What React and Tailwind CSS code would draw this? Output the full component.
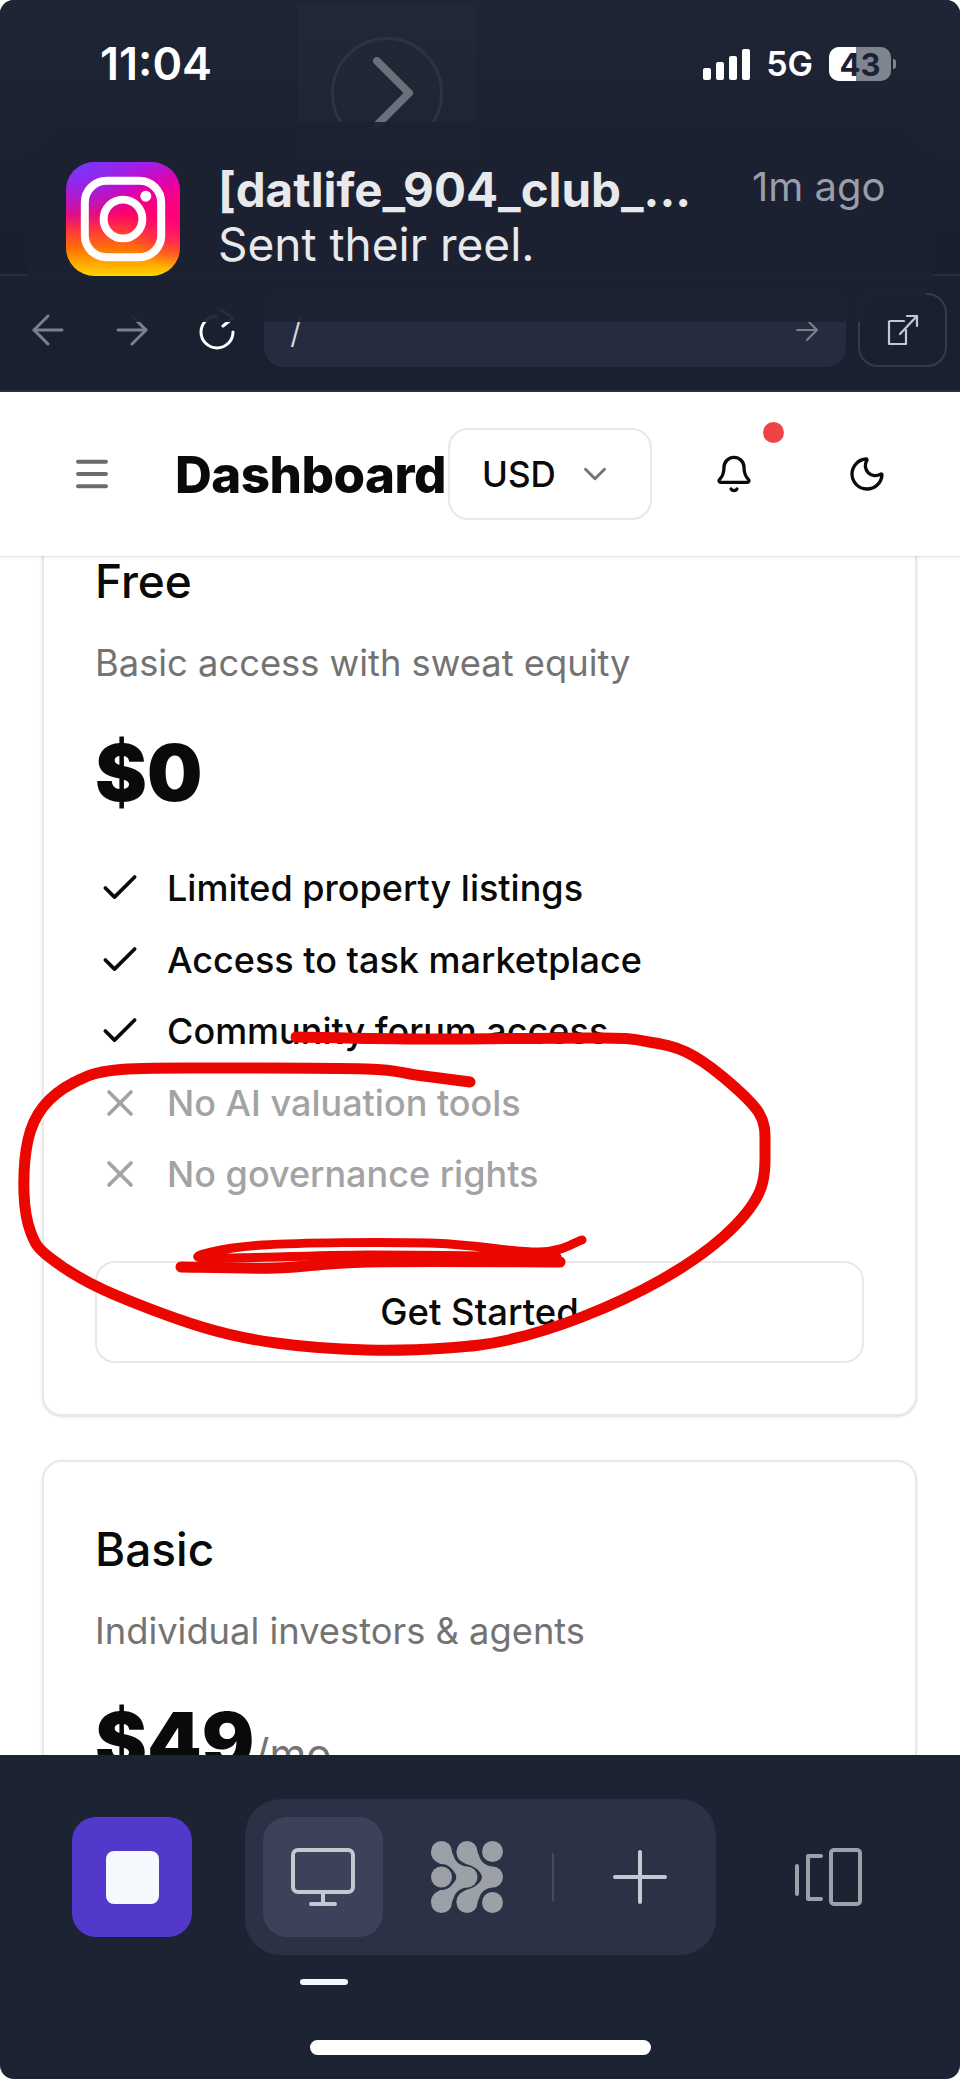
import { ArrowLeft, ArrowRight, Bell, Check, ChevronDown, Menu, Moon, X } from 'lucide-react'

const features = [
  { text: 'Limited property listings', ok: true },
  { text: 'Access to task marketplace', ok: true },
  { text: 'Community forum access', ok: true },
  { text: 'No AI valuation tools', ok: false },
  { text: 'No governance rights', ok: false },
]

// pontos tirados do zoom da tinta vermelha
const circlePoints = [
  [296, 1037], [429, 1039], [603, 1038], [649, 1042], [686, 1052], [723, 1077], [759, 1113], [765, 1147],
  [759, 1193], [723, 1237], [661, 1280], [582, 1317], [508, 1340], [447, 1348], [367, 1350], [276, 1343],
  [202, 1327], [104, 1290], [49, 1257], [31, 1233], [24, 1193], [28, 1140], [43, 1107], [73, 1083],
  [116, 1070], [214, 1068], [367, 1069], [416, 1075], [470, 1082],
]
const lineTopPoints = [[582, 1240], [539, 1252], [429, 1243], [263, 1245], [202, 1258], [368, 1255], [557, 1257]]
const lineBottomPoints = [[181, 1267], [276, 1268], [367, 1262], [560, 1262]]

// catmull-rom simples pra suavizar o traço
function smooth(points) {
  let d = `M${points[0][0]} ${points[0][1]}`
  for (let i = 0; i < points.length - 1; i++) {
    const p0 = points[i - 1] || points[i]
    const p1 = points[i]
    const p2 = points[i + 1]
    const p3 = points[i + 2] || p2
    const c1x = p1[0] + (p2[0] - p0[0]) / 6
    const c1y = p1[1] + (p2[1] - p0[1]) / 6
    const c2x = p2[0] - (p3[0] - p1[0]) / 6
    const c2y = p2[1] - (p3[1] - p1[1]) / 6
    d += `C${c1x} ${c1y} ${c2x} ${c2y} ${p2[0]} ${p2[1]}`
  }
  return d
}

function InstagramIcon() {
  return (
    <svg viewBox="0 0 100 100" className="w-[114px] h-[114px] shrink-0">
      <defs>
        <linearGradient id="igBase" x1="0" y1="1" x2="0" y2="0">
          <stop offset="0" stopColor="#ffd600" />
          <stop offset="0.22" stopColor="#ff7a00" />
          <stop offset="0.55" stopColor="#ff0069" />
          <stop offset="0.8" stopColor="#d300c5" />
          <stop offset="1" stopColor="#a020e8" />
        </linearGradient>
        <radialGradient id="igPurple" cx="0.1" cy="0" r="0.6">
          <stop offset="0" stopColor="#7638fa" />
          <stop offset="1" stopColor="#7638fa" stopOpacity="0" />
        </radialGradient>
        <radialGradient id="igPink" cx="1" cy="0.45" r="0.5">
          <stop offset="0" stopColor="#ff0080" />
          <stop offset="1" stopColor="#ff0080" stopOpacity="0" />
        </radialGradient>
      </defs>
      <rect width="100" height="100" rx="25" fill="url(#igBase)" />
      <rect width="100" height="100" rx="25" fill="url(#igPink)" />
      <rect width="100" height="100" rx="25" fill="url(#igPurple)" />
      <rect x="16.5" y="16.5" width="67" height="67" rx="19" fill="none" stroke="#fff" strokeWidth="7" />
      <circle cx="50" cy="50" r="17" fill="none" stroke="#fff" strokeWidth="7" />
      <circle cx="70" cy="30" r="4.8" fill="#fff" />
    </svg>
  )
}

function SignalBars() {
  return (
    <div className="flex items-end gap-[5px] h-[31px]">
      <div className="w-[8px] h-[12px] bg-white rounded-[2px]" />
      <div className="w-[8px] h-[18px] bg-white rounded-[2px]" />
      <div className="w-[8px] h-[24px] bg-white rounded-[2px]" />
      <div className="w-[8px] h-[31px] bg-white rounded-[2px]" />
    </div>
  )
}

function Battery() {
  return (
    <div className="flex items-center gap-[2px]">
      <div className="relative w-[62px] h-[34px] rounded-[10px] overflow-hidden bg-[#80848f] flex items-center justify-center">
        <div className="absolute left-0 top-0 bottom-0 w-[27px] bg-white" />
        <span className="relative text-[31px] leading-none font-bold text-[#1c2233]">43</span>
      </div>
      <div className="w-[3px] h-[10px] rounded-r-full bg-[#80848f]" />
    </div>
  )
}

function DotsLogo() {
  const bg = '#2c3246'
  const fg = '#9ca1a8'
  // faixa que sai do ponto de cima e entra no ponto do meio, repetida com transform
  const band = 'M25.5 10.5C25.5 19 32 22 38 24C44 26 50 30 51 36L61.5 36L61.5 25.5C55 25 50 21 48.5 16C47.5 13 46.5 12 46.5 10.5Z'
  const dots = [
    [10.5, 10.5], [36, 10.5], [61.5, 10.5],
    [36, 36], [61.5, 36],
    [10.5, 61.5], [36, 61.5], [61.5, 61.5],
  ]
  return (
    <svg viewBox="0 0 72 72" className="w-[72px] h-[72px]" fill={fg}>
      <path d={band} />
      <path d={band} transform="matrix(1 0 0 -1 0 72)" />
      <path d={band} transform="translate(-25.5 0)" />
      <path d={band} transform="matrix(1 0 0 -1 -25.5 72)" />
      {dots.map(([cx, cy]) => (
        <circle key={`${cx}-${cy}`} cx={cx} cy={cy} r="10.5" />
      ))}
      <circle cx="10.5" cy="36" r="13" fill={bg} />
      <circle cx="10.5" cy="36" r="10.5" />
    </svg>
  )
}

function Scribble() {
  return (
    <svg viewBox="0 0 960 2079" className="absolute inset-0 w-[960px] h-[2079px] pointer-events-none" fill="none" stroke="#ec0600" strokeWidth="11" strokeLinecap="round" strokeLinejoin="round">
      <path d={smooth(circlePoints)} />
      <path d={smooth(lineTopPoints)} strokeWidth="9" />
      <path d={smooth(lineBottomPoints)} strokeWidth="11" />
    </svg>
  )
}

function PlanCard({ title, subtitle, children }) {
  return (
    <div className="border-2 border-[#e8e8e8] rounded-[20px] bg-white pt-[63px] px-[51px] pb-[51px] shadow-sm">
      <h3 className="text-[46px] leading-[48px] font-medium text-[#0a0a0a]">{title}</h3>
      <p className="mt-[33px] text-[36.3px] leading-[50px] text-[#737373]">{subtitle}</p>
      {children}
    </div>
  )
}

export default function App() {
  return (
    <div className="relative w-[960px] h-[2079px] overflow-hidden rounded-[14px] flex flex-col bg-white" style={{ fontFamily: 'Inter, "Liberation Sans", sans-serif' }}>
      {/* barra de cima */}
      <div className="h-[392px] shrink-0 flex flex-col bg-[#1a2030] border-b-2 border-[#2a2f40]">
        <div className="h-[276px] shrink-0 border-b-2 border-[#2a2f40] bg-gradient-to-b from-[#1e2535] to-[#191e2d] flex justify-between items-start pt-[38px] pl-[100px] pr-[64px]">
          <span className="text-[45px] leading-[52px] font-semibold text-white">11:04</span>
          <div className="flex items-center gap-[16px] pt-[8px]">
            <SignalBars />
            <span className="text-[34px] leading-[36px] font-semibold text-white">5G</span>
            <Battery />
          </div>
        </div>
        <div className="flex-1 flex items-start pl-[24px] pr-[13px] pt-[17px]">
          <div className="flex items-center w-[240px] h-[74px] text-[#7c808a]">
            <ArrowLeft size={48} strokeWidth={1.5} />
            <ArrowRight size={48} strokeWidth={1.5} className="ml-[36px]" />
            <svg viewBox="0 0 44 44" className="ml-[41px] w-[44px] h-[44px] text-white" fill="none" stroke="currentColor" strokeWidth="3" strokeLinecap="round">
              <path d="M36 24a16 16 0 1 1-16-16" />
              <path d="M24 2l12 8-10 8" />
            </svg>
          </div>
          <div className="w-[582px] h-[74px] rounded-[20px] bg-[#272b3f] flex items-center justify-between pl-[26px] pr-[22px]">
            <span className="text-[36px] font-light text-[#d5d7dd]">/</span>
            <ArrowRight size={34} strokeWidth={1.5} className="text-[#7c808a]" />
          </div>
          <div className="ml-[12px] w-[89px] h-[74px] rounded-[20px] border-2 border-[#343a50] flex items-center justify-center text-[#c5c8cf]">
            <svg viewBox="0 0 34 34" className="w-[34px] h-[34px]" fill="none" stroke="currentColor" strokeWidth="2.2" strokeLinecap="round" strokeLinejoin="round">
              <path d="M18 8H3v23h17V17" />
              <path d="M14 21L31 3M21 3h10v10" />
            </svg>
          </div>
        </div>
      </div>

      {/* header */}
      <header className="relative z-10 h-[164px] shrink-0 bg-white shadow-sm flex items-center pl-[71px]">
        <Menu size={42} strokeWidth={2.2} className="text-[#6b6b6b]" />
        <h1 className="ml-[62px] w-[273px] text-[51px] leading-none font-extrabold text-[#0a0a0a] tracking-[-0.5px] whitespace-nowrap">Dashboard</h1>
        <button className="w-[204px] h-[92px] rounded-[20px] border-2 border-[#e8e8e8] flex items-center justify-between pl-[32px] pr-[36px] text-[35px] font-medium text-[#0a0a0a]">
          USD
          <ChevronDown size={38} strokeWidth={1.8} className="text-[#737373]" />
        </button>
        <div className="relative ml-[62px]">
          <Bell size={40} strokeWidth={2} className="text-[#0a0a0a]" />
          <span className="absolute -top-[32px] left-[49px] w-[21px] h-[21px] rounded-full bg-[#ef4444]" />
        </div>
        <Moon size={40} strokeWidth={2} className="ml-[93px] text-[#0a0a0a]" />
      </header>

      {/* conteudo rolado */}
      <main className="flex-1 min-h-0 overflow-hidden pl-[42px] pr-[43px]">
        <div className="-mt-[64px] flex flex-col gap-[44px]">
          <PlanCard title="Free" subtitle="Basic access with sweat equity">
            <p className="mt-[30px] text-[78px] leading-[110px] font-black text-[#0a0a0a]">$0</p>
            <ul className="mt-[35px] flex flex-col gap-[21.6px]">
              {features.map((f) => (
                <li key={f.text} className={`flex items-center gap-[25px] h-[50px] pl-[3px] text-[36px] font-medium whitespace-nowrap ${f.ok ? 'text-[#0a0a0a]' : 'text-[#a3a3a3]'}`}>
                  {f.ok ? <Check size={44} strokeWidth={2} /> : <X size={44} strokeWidth={2} />}
                  {f.text}
                </li>
              ))}
            </ul>
            <button className="mt-[62px] w-full h-[102px] rounded-[20px] border-2 border-[#e8e8e8] text-[36.5px] font-medium text-[#0a0a0a]">
              Get Started
            </button>
          </PlanCard>
          <PlanCard title="Basic" subtitle="Individual investors & agents">
            <p className="mt-[30px] text-[78px] leading-[110px] font-black text-[#0a0a0a]">
              $49<span className="text-[42px] font-normal text-[#737373]">/mo</span>
            </p>
          </PlanCard>
        </div>
      </main>

      {/* barra de baixo */}
      <footer className="h-[324px] shrink-0 bg-[#1c2333] flex flex-col items-center">
        <div className="w-full flex items-center pt-[44px] pl-[72px]">
          <div className="w-[120px] h-[120px] rounded-[24px] bg-[#5239cc] flex items-center justify-center">
            <div className="w-[53px] h-[53px] rounded-[8px] bg-[#f5f8fc]" />
          </div>
          <div className="ml-[53px] w-[471px] h-[156px] rounded-[36px] bg-[#2c3246] flex items-center pl-[18px]">
            <div className="w-[120px] h-[120px] rounded-[24px] bg-[#3b425a] flex items-center justify-center">
              <svg viewBox="0 0 64 58" className="w-[64px] h-[58px]" fill="none" stroke="#c5c9cf" strokeWidth="4" strokeLinecap="round">
                <rect x="2" y="2" width="60" height="42" rx="5" />
                <path d="M32 44v12M20 56h24" />
              </svg>
            </div>
            <div className="ml-[48px]">
              <DotsLogo />
            </div>
            <div className="ml-[49px] w-[2px] h-[48px] bg-[#454b60]" />
            <svg viewBox="0 0 54 54" className="ml-[59px] w-[54px] h-[54px]" stroke="#c5c9cf" strokeWidth="4" strokeLinecap="round">
              <path d="M27 2v50M2 27h50" />
            </svg>
          </div>
          <svg viewBox="0 0 68 58" className="ml-[78px] w-[68px] h-[58px]" fill="none" stroke="#9ca1a8" strokeWidth="4" strokeLinecap="round" strokeLinejoin="round">
            <path d="M3 18v28M27 8H14v43h13" />
            <rect x="37" y="2" width="29" height="54" rx="3" />
          </svg>
        </div>
        <div className="mt-[24px] ml-[-313px] w-[48px] h-[6px] rounded-full bg-[#f5f8fc]" />
        <div className="mt-[55px] w-[341px] h-[15px] rounded-full bg-white" />
      </footer>

      {/* chevron por cima */}
      <div className="absolute left-[298px] top-[5px] w-[178px] h-[175px] bg-white/[0.015] flex items-center justify-center">
        <div className="w-[112px] h-[112px] rounded-full border-[3px] border-[#2f3340] flex items-center justify-center">
          <svg viewBox="0 0 40 72" className="w-[40px] h-[72px] ml-[12px]" fill="none" stroke="#6b6f78" strokeWidth="8" strokeLinecap="round" strokeLinejoin="round">
            <path d="M4 4l32 32L4 68" />
          </svg>
        </div>
      </div>

      {/* notificacao */}
      <div className="absolute left-[25px] top-[122px] w-[910px] h-[200px] rounded-[60px] bg-[#1c2232]/95 flex items-start pl-[41px] pt-[40px]">
        <InstagramIcon />
        <div className="ml-[38px] w-[534px]">
          <p className="text-[47.5px] leading-[56px] font-bold text-[#e8e9ec] whitespace-nowrap">[datlife_904_club_...</p>
          <p className="text-[46px] leading-[52px] text-[#e8e9ec]">Sent their reel.</p>
        </div>
        <span className="text-[40px] leading-[50px] text-[#9a9eaa]">1m ago</span>
      </div>

      <Scribble />
    </div>
  )
}
